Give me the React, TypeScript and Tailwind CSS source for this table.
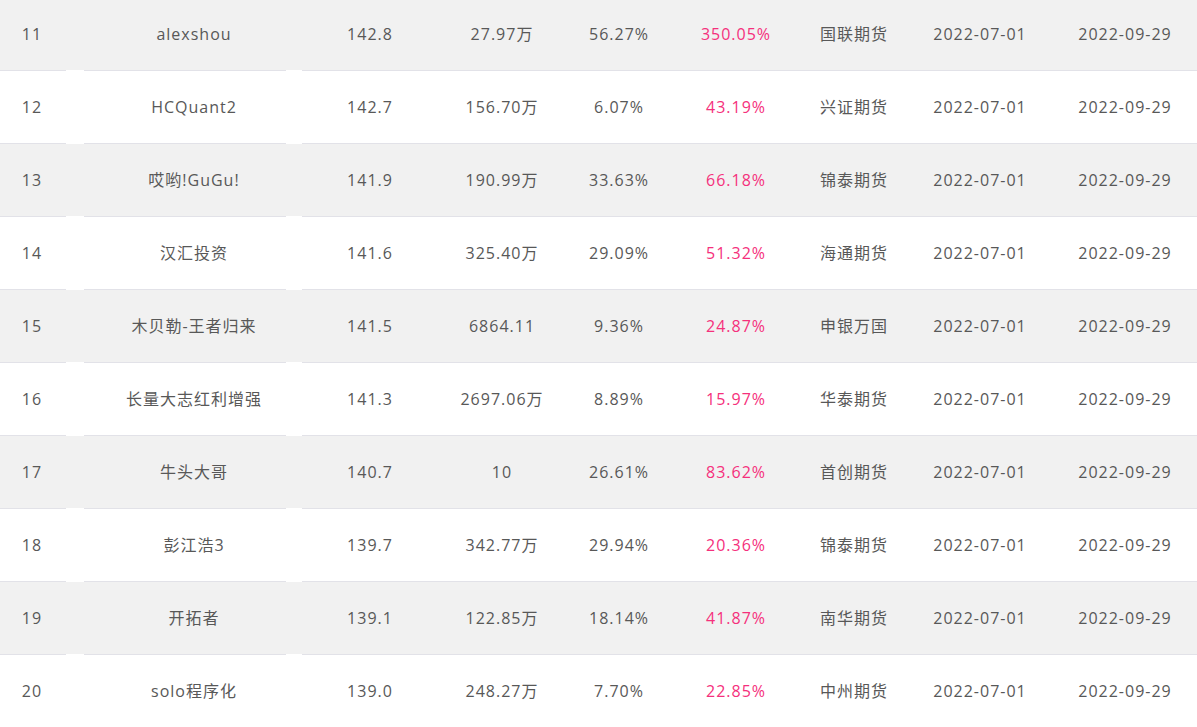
import React from 'react';

type Row = {
  rank: number;
  name: string;
  score: string;
  equity: string;
  drawdown: string;
  profit: string;
  broker: string;
  start: string;
  end: string;
};

const ROWS: Row[] = [
  { rank: 11, name: 'alexshou', score: '142.8', equity: '27.97万', drawdown: '56.27%', profit: '350.05%', broker: '国联期货', start: '2022-07-01', end: '2022-09-29' },
  { rank: 12, name: 'HCQuant2', score: '142.7', equity: '156.70万', drawdown: '6.07%', profit: '43.19%', broker: '兴证期货', start: '2022-07-01', end: '2022-09-29' },
  { rank: 13, name: '哎哟!GuGu!', score: '141.9', equity: '190.99万', drawdown: '33.63%', profit: '66.18%', broker: '锦泰期货', start: '2022-07-01', end: '2022-09-29' },
  { rank: 14, name: '汉汇投资', score: '141.6', equity: '325.40万', drawdown: '29.09%', profit: '51.32%', broker: '海通期货', start: '2022-07-01', end: '2022-09-29' },
  { rank: 15, name: '木贝勒-王者归来', score: '141.5', equity: '6864.11', drawdown: '9.36%', profit: '24.87%', broker: '申银万国', start: '2022-07-01', end: '2022-09-29' },
  { rank: 16, name: '长量大志红利增强', score: '141.3', equity: '2697.06万', drawdown: '8.89%', profit: '15.97%', broker: '华泰期货', start: '2022-07-01', end: '2022-09-29' },
  { rank: 17, name: '牛头大哥', score: '140.7', equity: '10', drawdown: '26.61%', profit: '83.62%', broker: '首创期货', start: '2022-07-01', end: '2022-09-29' },
  { rank: 18, name: '彭江浩3', score: '139.7', equity: '342.77万', drawdown: '29.94%', profit: '20.36%', broker: '锦泰期货', start: '2022-07-01', end: '2022-09-29' },
  { rank: 19, name: '开拓者', score: '139.1', equity: '122.85万', drawdown: '18.14%', profit: '41.87%', broker: '南华期货', start: '2022-07-01', end: '2022-09-29' },
  { rank: 20, name: 'solo程序化', score: '139.0', equity: '248.27万', drawdown: '7.70%', profit: '22.85%', broker: '中州期货', start: '2022-07-01', end: '2022-09-29' },
];

const font = { fontFamily: '"Open Sans", "Noto Sans CJK SC", sans-serif' };

const App: React.FC = () => {
  return (
    <div className="w-[1197px] h-[727px] overflow-hidden bg-white text-[16px] text-[#585858] tracking-[1px]" style={font}>
      <div className="-mt-[2px]">
        {ROWS.map((r, idx) => (
          <div key={r.rank}>
            <div className={`flex items-center h-[72px] ${idx % 2 === 0 ? 'bg-[#f1f1f1]' : 'bg-white'}`}>
              <div className="w-[64px] text-center">{r.rank}</div>
              <div className="w-[20px]" />
              <div className="w-[220px] text-center">{r.name}</div>
              <div className="w-[132px] text-center">{r.score}</div>
              <div className="w-[132px] text-center">{r.equity}</div>
              <div className="w-[102px] text-center">{r.drawdown}</div>
              <div className="w-[132px] text-center text-[#f5307c]">{r.profit}</div>
              <div className="w-[104px] text-center">{r.broker}</div>
              <div className="w-[148px] text-center">{r.start}</div>
              <div className="w-[142px] text-center">{r.end}</div>
            </div>
            <div className="flex h-px bg-white">
              <div className="w-[66px] bg-[#e2e2e8]" />
              <div className="w-[18px]" />
              <div className="w-[202px] bg-[#e2e2e8]" />
              <div className="w-[16px]" />
              <div className="flex-1 bg-[#e2e2e8]" />
            </div>
          </div>
        ))}
      </div>
    </div>
  );
};

export default App;
